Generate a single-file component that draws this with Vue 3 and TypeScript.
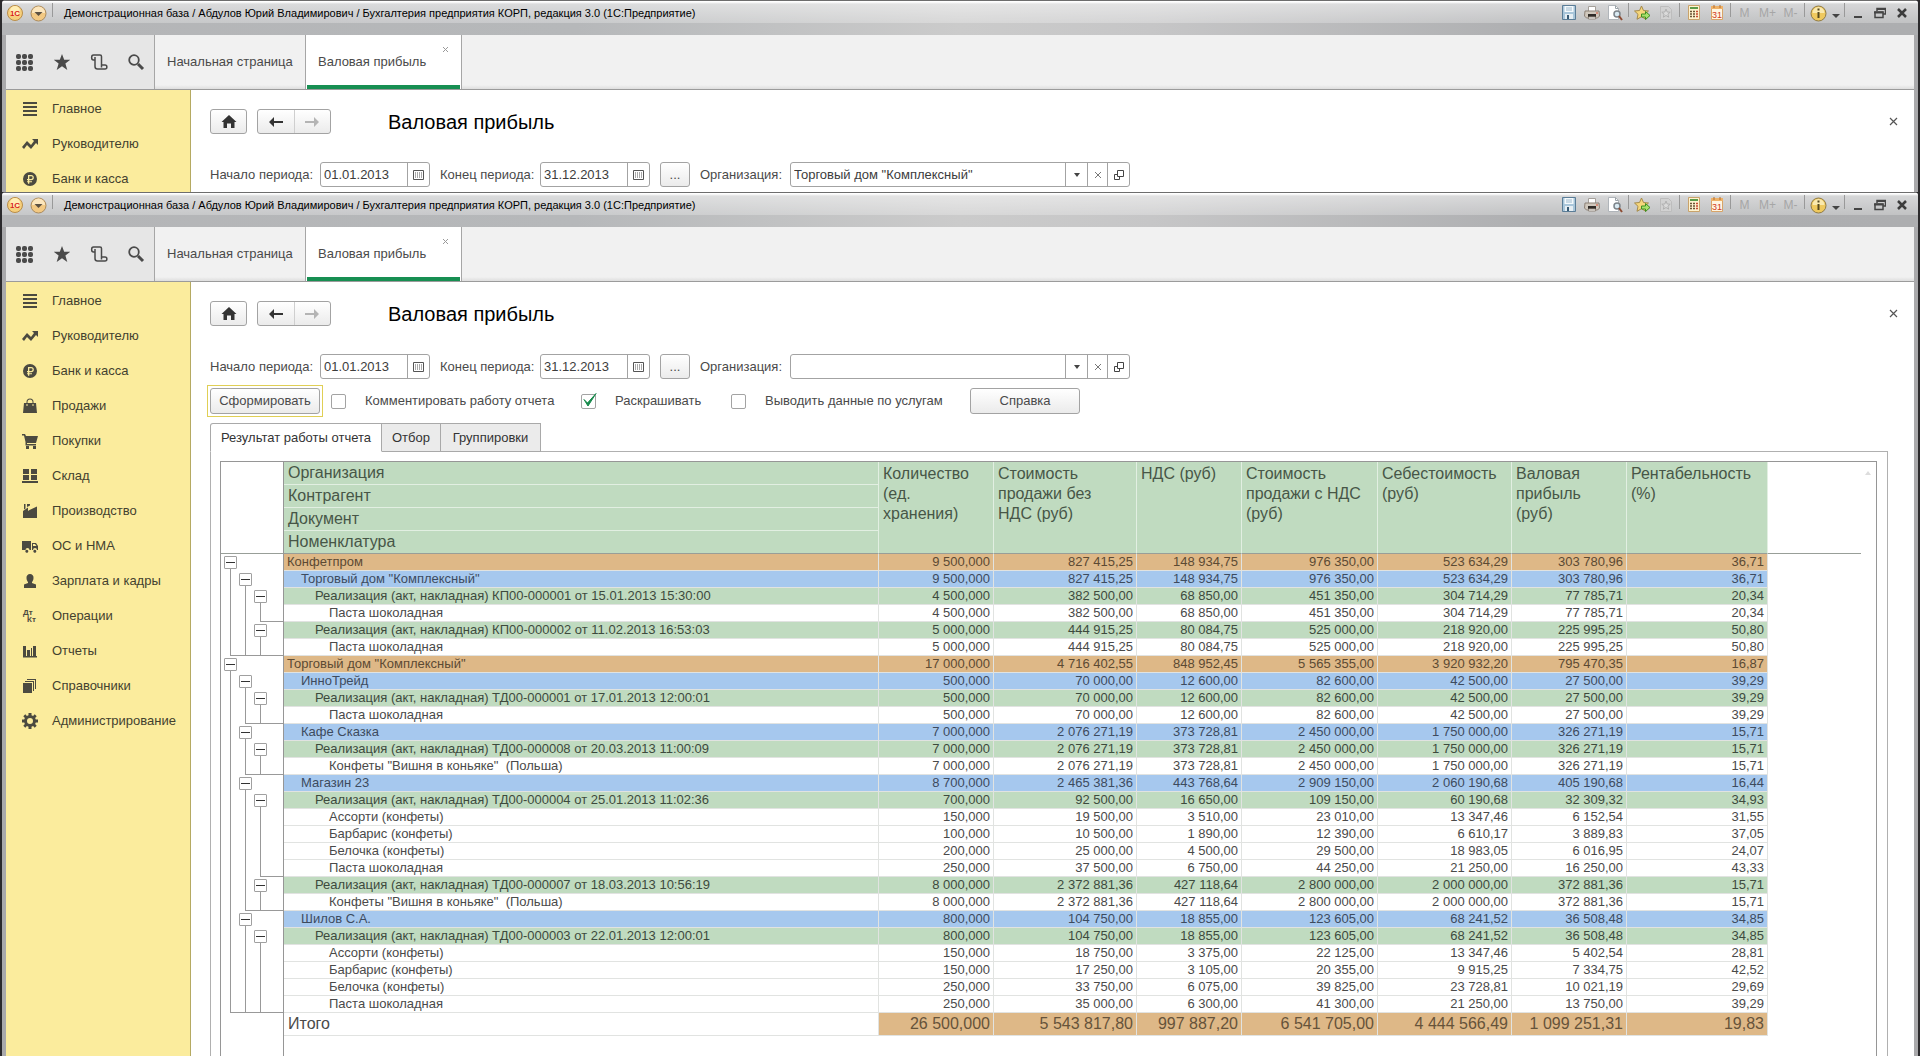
<script setup lang="ts">
import { reactive } from 'vue'

interface NavItem { label: string; d: string }
interface Row { level: number; name: string; cells: string[]; ends?: number }
interface AppWindow {
  id: string
  full: boolean
  from: string
  to: string
  org: string
}

const windows = reactive<AppWindow[]>([
  { id: 'back', full: false, from: '01.01.2013', to: '31.12.2013', org: 'Торговый дом "Комплексный"' },
  { id: 'front', full: true, from: '01.01.2013', to: '31.12.2013', org: '' },
])

const title = 'Демонстрационная база / Абдулов Юрий Владимирович / Бухгалтерия предприятия КОРП, редакция 3.0 (1С:Предприятие)'

const nav: NavItem[] = [
  { label: 'Главное', d: 'M1 1h14v2H1zM1 5h14v2H1zM1 9h14v2H1zM1 13h14v2H1z' },
  { label: 'Руководителю', d: 'M0 11 5 5l4 4 3-4-2-2h6v6l-2-2-5 6-4-4-3 4z' },
  { label: 'Банк и касса', d: 'M8 1a7 7 0 1 0 0 14A7 7 0 0 0 8 1zM6 4h3.200a2.600 2.600 0 0 1 0 5.200H7.300v1h2.700v1H7.300v1.500H6v-1.500H5v-1h1v-1H5V8h1zm1.300 1.200V8h1.900a1.400 1.400 0 0 0 0-2.800z' },
  { label: 'Продажи', d: 'M2 5h2.500V4a3.500 3.500 0 0 1 7 0v1H14l1 10H1zM5.500 5h5V4a2.500 2.500 0 0 0-5 0zM4.500 6v2h1V6zM10.500 6v2h1V6z' },
  { label: 'Покупки', d: 'M0 1h3l1 2h12l-2 7H5v1h9v1.500H3.500V9L2 2.500H0zM4 13h3v3H4zM11 13h3v3h-3z' },
  { label: 'Склад', d: 'M1 1h6v5H1zM9 1h6v5H9zM1 7h6v5H1zM9 7h6v5H9zM0 13h16v2H0z' },
  { label: 'Производство', d: 'M1 15V8l5-3.500V8l1.500-1L15 3.500V15zM2 1h1.500v4.500L2 6.500zM5 1h3v1.500L5 4z' },
  { label: 'ОС и НМА', d: 'M0 3h9v9H7.500a2 2 0 0 0-4 0H0zM10 5h4l2 3v4h-1a2 2 0 0 0-4 0h-1zM11 6v2h3.500L13 6zM4 12a1.500 1.500 0 1 1 0 2.500A1.500 1.500 0 0 1 4 12zM12 12a1.500 1.500 0 1 1 0 2.500 1.500 1.500 0 0 1 0-2.500z' },
  { label: 'Зарплата и кадры', d: 'M8 1a3.500 3.500 0 0 1 3.500 4c0 2-1 3.500-1.500 4v1l4 1.500V15H2v-3.500L6 10V9c-.5-.5-1.500-2-1.500-4A3.500 3.500 0 0 1 8 1z' },
  { label: 'Операции', d: '' },
  { label: 'Отчеты', d: 'M1 13V3h3v10h1V7h3v6h1V5h1v8h1V3h3v10h1v1.500H1z' },
  { label: 'Справочники', d: 'M1 5h9v10H1zM3 3h9v10h-1V4H3zM5 1h9v10h-1V2H5z' },
  { label: 'Администрирование', d: 'M6.500 0h3v2.200l1.600.7 1.600-1.600 2 2-1.600 1.600.7 1.600H16v3h-2.200l-.7 1.600 1.600 1.600-2 2-1.600-1.600-1.600.7V16h-3v-2.200l-1.600-.7-1.600 1.600-2-2 1.600-1.600-.7-1.600H0v-3h2.200l.7-1.600-1.600-1.600 2-2 1.600 1.600 1.600-.7zM8 5a3 3 0 1 0 0 6 3 3 0 0 0 0-6z' },
]

const groupHeads = ['Организация', 'Контрагент', 'Документ', 'Номенклатура']
const valueHeads = [
  'Количество\n(ед.\nхранения)',
  'Стоимость\nпродажи без\nНДС (руб)',
  'НДС (руб)',
  'Стоимость\nпродажи с НДС\n(руб)',
  'Себестоимость\n(руб)',
  'Валовая\nприбыль\n(руб)',
  'Рентабельность\n(%)',
]

function row(level: number, name: string, values: string, ends?: number): Row {
  return { level, name, cells: values.split('|'), ends }
}

// `ends` is the outermost outline level whose bracket closes under the row
const rows: Row[] = [
  row(0, 'Конфетпром', '9 500,000|827 415,25|148 934,75|976 350,00|523 634,29|303 780,96|36,71'),
  row(1, 'Торговый дом "Комплексный"', '9 500,000|827 415,25|148 934,75|976 350,00|523 634,29|303 780,96|36,71'),
  row(2, 'Реализация (акт, накладная) КП00-000001 от 15.01.2013 15:30:00', '4 500,000|382 500,00|68 850,00|451 350,00|304 714,29|77 785,71|20,34'),
  row(3, 'Паста шоколадная', '4 500,000|382 500,00|68 850,00|451 350,00|304 714,29|77 785,71|20,34', 2),
  row(2, 'Реализация (акт, накладная) КП00-000002 от 11.02.2013 16:53:03', '5 000,000|444 915,25|80 084,75|525 000,00|218 920,00|225 995,25|50,80'),
  row(3, 'Паста шоколадная', '5 000,000|444 915,25|80 084,75|525 000,00|218 920,00|225 995,25|50,80', 0),
  row(0, 'Торговый дом "Комплексный"', '17 000,000|4 716 402,55|848 952,45|5 565 355,00|3 920 932,20|795 470,35|16,87'),
  row(1, 'ИнноТрейд', '500,000|70 000,00|12 600,00|82 600,00|42 500,00|27 500,00|39,29'),
  row(2, 'Реализация (акт, накладная) ТД00-000001 от 17.01.2013 12:00:01', '500,000|70 000,00|12 600,00|82 600,00|42 500,00|27 500,00|39,29'),
  row(3, 'Паста шоколадная', '500,000|70 000,00|12 600,00|82 600,00|42 500,00|27 500,00|39,29', 1),
  row(1, 'Кафе Сказка', '7 000,000|2 076 271,19|373 728,81|2 450 000,00|1 750 000,00|326 271,19|15,71'),
  row(2, 'Реализация (акт, накладная) ТД00-000008 от 20.03.2013 11:00:09', '7 000,000|2 076 271,19|373 728,81|2 450 000,00|1 750 000,00|326 271,19|15,71'),
  row(3, 'Конфеты "Вишня в коньяке"  (Польша)', '7 000,000|2 076 271,19|373 728,81|2 450 000,00|1 750 000,00|326 271,19|15,71', 1),
  row(1, 'Магазин 23', '8 700,000|2 465 381,36|443 768,64|2 909 150,00|2 060 190,68|405 190,68|16,44'),
  row(2, 'Реализация (акт, накладная) ТД00-000004 от 25.01.2013 11:02:36', '700,000|92 500,00|16 650,00|109 150,00|60 190,68|32 309,32|34,93'),
  row(3, 'Ассорти (конфеты)', '150,000|19 500,00|3 510,00|23 010,00|13 347,46|6 152,54|31,55'),
  row(3, 'Барбарис (конфеты)', '100,000|10 500,00|1 890,00|12 390,00|6 610,17|3 889,83|37,05'),
  row(3, 'Белочка (конфеты)', '200,000|25 000,00|4 500,00|29 500,00|18 983,05|6 016,95|24,07'),
  row(3, 'Паста шоколадная', '250,000|37 500,00|6 750,00|44 250,00|21 250,00|16 250,00|43,33', 2),
  row(2, 'Реализация (акт, накладная) ТД00-000007 от 18.03.2013 10:56:19', '8 000,000|2 372 881,36|427 118,64|2 800 000,00|2 000 000,00|372 881,36|15,71'),
  row(3, 'Конфеты "Вишня в коньяке"  (Польша)', '8 000,000|2 372 881,36|427 118,64|2 800 000,00|2 000 000,00|372 881,36|15,71', 1),
  row(1, 'Шилов С.А.', '800,000|104 750,00|18 855,00|123 605,00|68 241,52|36 508,48|34,85'),
  row(2, 'Реализация (акт, накладная) ТД00-000003 от 22.01.2013 12:00:01', '800,000|104 750,00|18 855,00|123 605,00|68 241,52|36 508,48|34,85'),
  row(3, 'Ассорти (конфеты)', '150,000|18 750,00|3 375,00|22 125,00|13 347,46|5 402,54|28,81'),
  row(3, 'Барбарис (конфеты)', '150,000|17 250,00|3 105,00|20 355,00|9 915,25|7 334,75|42,52'),
  row(3, 'Белочка (конфеты)', '250,000|33 750,00|6 075,00|39 825,00|23 728,81|10 021,19|29,69'),
  row(3, 'Паста шоколадная', '250,000|35 000,00|6 300,00|41 300,00|21 250,00|13 750,00|39,29', 0),
]

const totals = ['26 500,000', '5 543 817,80', '997 887,20', '6 541 705,00', '4 444 566,49', '1 099 251,31', '19,83']

function slotClass(r: Row, slot: number) {
  return {
    toggle: slot === r.level,
    line: slot < r.level,
    corner: r.ends === slot,
    under: r.ends !== undefined && slot > r.ends,
  }
}

const options = reactive({ comment: false, colour: true, services: false })
</script>

<template>
  <div class="desktop">
    <section v-for="w in windows" :key="w.id" class="window" :class="w.full ? 'front' : 'back'">
      <header class="titlebar">
        <svg class="orb" width="16" height="16" viewBox="0 0 16 16">
          <circle cx="8" cy="8" r="7.500" fill="#f6cf7c" stroke="#b98d49" />
          <circle cx="8" cy="6" r="5" fill="#ffeeb4" />
          <text x="8" y="11" text-anchor="middle" font-size="8" font-weight="bold" fill="#d8231b">1С</text>
        </svg>
        <button class="orb-btn" type="button" aria-label="Меню">
          <svg width="17" height="17" viewBox="0 0 17 17">
            <circle cx="8.500" cy="8.500" r="7.500" fill="#f3c983" stroke="#a98a5e" />
            <path d="M2 8a6.500 6.500 0 0 1 13 0z" fill="#fce6bd" />
            <path d="M4.500 7h8l-4 4z" fill="#5c5142" />
          </svg>
        </button>
        <i class="sep first"></i>
        <span class="title">{{ title }}</span>
        <div class="title-tools">
          <button type="button" aria-label="Сохранить">
            <svg width="16" height="16" viewBox="0 0 16 16"><path d="M1.500.5h13v14h-13z" fill="#a9c6da" stroke="#5b7d97" /><path d="M3.500 1h9v6h-9z" fill="#f4f9fc" /><path d="M5 3h6M5 5h6" stroke="#9ebacd" /><path d="M4 9h8v5H4z" fill="#e6eef3" /><path d="M6 10h2v4H6z" fill="#385b75" /></svg>
          </button>
          <button type="button" aria-label="Печать">
            <svg width="16" height="16" viewBox="0 0 16 16"><path d="M4.500 1.500h7v5h-7z" fill="#fff" stroke="#a5a09a" /><path d="M1 6h14l.5 5-2 2h-11l-2-2z" fill="#d0c8bd" stroke="#8c8176" /><path d="M4 9h8v3H4z" fill="#302b27" /><path d="M4.500 12h7v2h-7z" fill="#fff" stroke="#92887d" /><path d="M12 8h2" stroke="#d84f35" /></svg>
          </button>
          <button type="button" aria-label="Предварительный просмотр">
            <svg width="16" height="16" viewBox="0 0 16 16"><path d="M1.500.5h7l3 3v11h-10z" fill="#fff" stroke="#b0b5ba" /><path d="M8.500.5v3h3" fill="none" stroke="#9aa2a8" /><circle cx="10" cy="9" r="3" fill="#d9e9f2" stroke="#7c848a" stroke-width="1.500" /><path d="m12 11 3 4" stroke="#8d4c34" stroke-width="2" /></svg>
          </button>
          <i class="sep"></i>
          <button type="button" aria-label="Добавить в избранное">
            <svg width="17" height="16" viewBox="0 0 17 16"><path d="m7.500 1 2 4.500 5 .5-3.600 3.300 1 5-4.400-2.600L3 14.300l1-5L.5 6l5-.5z" fill="#f6d67b" stroke="#a58a4a" /><path d="M7.500 9h4V6.500l4.500 4-4.500 4V12h-4z" fill="#a9e26b" stroke="#3e8f22" /></svg>
          </button>
          <button type="button" aria-label="Избранное" disabled>
            <svg width="16" height="16" viewBox="0 0 16 16"><path d="M2.500 1.500h8l3 3v10h-11z" fill="#d2d2d2" stroke="#bdbdbd" /><path d="m8 4 1.200 3 3 .2-2.300 2 .8 3L8 10.500l-2.700 1.700.8-3-2.300-2 3-.2z" fill="#dadada" stroke="#b0b0b0" /></svg>
          </button>
          <i class="sep"></i>
          <button type="button" aria-label="Калькулятор">
            <svg width="14" height="16" viewBox="0 0 14 16"><path d="M1.500.5h11v14h-11z" fill="#fff3cf" stroke="#c9a36b" /><path d="M3 2h8v2H3z" fill="#5b9a49" /><path d="M3 6.500h2M6 6.500h2M3 9h2M6 9h2M3 11.500h2M6 11.500h2" stroke="#6a5334" stroke-width="1.500" /><path d="M9 6.500h2M9 9h2M9 11.500h2" stroke="#c84a32" stroke-width="1.500" /></svg>
          </button>
          <button type="button" aria-label="Календарь">
            <svg width="14" height="16" viewBox="0 0 14 16"><path d="M1.500 1.500h11v13h-11z" fill="#fff6e2" stroke="#d8a469" /><path d="M1 1h12v3H1z" fill="#efb268" /><path d="M4 0v3M10 0v3" stroke="#b26a2c" /><text x="7" y="13" text-anchor="middle" font-size="9" fill="#cf3a22">31</text></svg>
          </button>
          <i class="sep"></i>
          <button type="button" class="mem" disabled>M</button>
          <button type="button" class="mem" disabled>M+</button>
          <button type="button" class="mem" disabled>M-</button>
          <i class="sep"></i>
          <button type="button" aria-label="Сведения">
            <svg width="17" height="17" viewBox="0 0 17 17"><circle cx="8.500" cy="8.500" r="7.500" fill="#efc95e" stroke="#8f7a45" /><path d="M2.500 8a6 6 0 0 1 12 0z" fill="#fae9ae" /><path d="M7.500 3.500h2v2h-2zM7.500 7h2v6h-2z" fill="#55491f" /></svg>
          </button>
          <button type="button" class="slim" aria-label="Еще">
            <svg width="8" height="16" viewBox="0 0 8 16"><path d="M0 9h8l-4 4z" fill="#444" /></svg>
          </button>
          <i class="sep"></i>
          <button type="button" class="win" aria-label="Свернуть">
            <svg width="12" height="14" viewBox="0 0 12 14"><path d="M2 10h8v2H2z" fill="#444" /></svg>
          </button>
          <button type="button" class="win" aria-label="Восстановить">
            <svg width="12" height="12" viewBox="0 0 12 12"><path d="M3 4V1.500h8.500V7H9M1 5h8v5.500H1z" fill="none" stroke="#444" stroke-width="1.500" /><path d="M3 1h9v2H3zM0 4.500h9.500v2H0z" fill="#444" /></svg>
          </button>
          <button type="button" class="win" aria-label="Закрыть">
            <svg width="12" height="12" viewBox="0 0 12 12"><path d="m2 2 8 8M10 2l-8 8" stroke="#3c3c3c" stroke-width="2.500" /></svg>
          </button>
        </div>
      </header>

      <div class="client">
        <div class="toolbar">
          <div class="tools">
            <button type="button" aria-label="Разделы">
              <svg width="17" height="17" viewBox="0 0 17 17"><g fill="#4a4a4a"><template v-for="y in 3" :key="y"><rect v-for="x in 3" :key="x" :x="(x - 1) * 6" :y="(y - 1) * 6" width="5" height="5" rx="2" /></template></g></svg>
            </button>
            <button type="button" aria-label="Избранное">
              <svg width="18" height="18" viewBox="0 0 18 18"><path d="m9 1 2.200 5.800H17.300l-4.900 3.700L14.300 17 9 13.200 3.700 17l1.900-6.500L.7 6.800h6.100z" fill="#4a4a4a" /></svg>
            </button>
            <button type="button" aria-label="История">
              <svg width="18" height="18" viewBox="0 0 18 18"><path d="M5 7H3.500C1 7 1 2 3.500 2H10c1 0 1.500.5 1.500 1.500V12H15c2.500 0 2.500 4 0 4H7.500C6 16 5 15 5 13.500V4M11.500 12v2.500" fill="none" stroke="#4a4a4a" stroke-width="1.500" /></svg>
            </button>
            <button type="button" aria-label="Поиск">
              <svg width="18" height="18" viewBox="0 0 18 18"><circle cx="7" cy="7" r="4.800" fill="none" stroke="#4a4a4a" stroke-width="1.800" /><path d="m11 11 5 5" stroke="#4a4a4a" stroke-width="3" /></svg>
            </button>
          </div>
          <a href="#" class="tab">Начальная страница</a>
          <div class="tab current">
            <a href="#">Валовая прибыль</a>
            <button type="button" class="tab-close" aria-label="Закрыть вкладку">
              <svg width="7" height="7" viewBox="0 0 7 7"><path d="m1 1 5 5M6 1 1 6" stroke="#9a9a9a" /></svg>
            </button>
          </div>
        </div>

        <div class="body">
          <nav class="sidebar">
            <a v-for="item in (w.full ? nav : nav.slice(0, 3))" :key="item.label" href="#">
              <svg width="16" height="16" viewBox="0 0 16 16">
                <path v-if="item.d" :d="item.d" fill="#4b4a40" fill-rule="evenodd" />
                <g v-else font-size="8" font-weight="bold" fill="#4b4a40"><text x="1" y="7">Дт</text><text x="5" y="14">Кт</text></g>
              </svg>
              {{ item.label }}
            </a>
          </nav>

          <main class="content">
            <div class="head-row">
              <button type="button" class="btn square" aria-label="Домой">
                <svg width="16" height="14" viewBox="0 0 16 14"><path d="m8 0 7.500 7h-2v6H10V8.500H6V13H2.500V7h-2z" fill="#333" /></svg>
              </button>
              <div class="pair">
                <button type="button" aria-label="Назад">
                  <svg width="14" height="12" viewBox="0 0 14 12"><path d="M14 5v2H5v4L0 6l5-5v4z" fill="#333" /></svg>
                </button>
                <button type="button" aria-label="Вперед" disabled>
                  <svg width="14" height="12" viewBox="0 0 14 12"><path d="M0 5v2h9v4l5-5-5-5v4z" fill="#b4b4b4" /></svg>
                </button>
              </div>
              <h1>Валовая прибыль</h1>
              <button type="button" class="page-close" aria-label="Закрыть">
                <svg width="9" height="9" viewBox="0 0 9 9"><path d="m1 1 7 7M8 1 1 8" stroke="#555" stroke-width="1.200" /></svg>
              </button>
            </div>

            <div class="form-row">
              <label :for="w.id + '-from'" class="period">Начало периода:</label>
              <div class="field date">
                <input :id="w.id + '-from'" v-model="w.from" type="text" />
                <button type="button" aria-label="Выбрать дату">
                  <svg width="11" height="10" viewBox="0 0 11 10"><path d="M.5.5h10v9H.5z" fill="none" stroke="#555" /><path d="M2 3h7M2 5h7M2 7h7" stroke="#555" stroke-dasharray="1 1" /></svg>
                </button>
              </div>
              <label :for="w.id + '-to'" class="period">Конец периода:</label>
              <div class="field date">
                <input :id="w.id + '-to'" v-model="w.to" type="text" />
                <button type="button" aria-label="Выбрать дату">
                  <svg width="11" height="10" viewBox="0 0 11 10"><path d="M.5.5h10v9H.5z" fill="none" stroke="#555" /><path d="M2 3h7M2 5h7M2 7h7" stroke="#555" stroke-dasharray="1 1" /></svg>
                </button>
              </div>
              <button type="button" class="btn dots">...</button>
              <label :for="w.id + '-org'" class="org-label">Организация:</label>
              <div class="field org">
                <input :id="w.id + '-org'" v-model="w.org" type="text" />
                <button type="button" aria-label="Выбрать">
                  <svg width="6" height="4" viewBox="0 0 6 4"><path d="M0 0h6L3 4z" fill="#444" /></svg>
                </button>
                <button type="button" class="narrow" aria-label="Очистить">
                  <svg width="6" height="6" viewBox="0 0 6 6"><path d="m0 0 6 6M6 0 0 6" stroke="#777" /></svg>
                </button>
                <button type="button" aria-label="Открыть">
                  <svg width="10" height="10" viewBox="0 0 10 10"><path d="M3.500.5h6v6h-6zM3.500 4.500h-3v5h5v-3" fill="none" stroke="#444" /></svg>
                </button>
              </div>
            </div>

            <template v-if="w.full">
              <div class="option-row">
                <button type="button" class="btn wide focus">Сформировать</button>
                <label class="check c1">
                  <span class="box"><input v-model="options.comment" type="checkbox" /></span>
                  Комментировать работу отчета
                </label>
                <label class="check c2">
                  <span class="box">
                    <input v-model="options.colour" type="checkbox" />
                    <svg v-if="options.colour" width="16" height="16" viewBox="0 0 16 16"><path d="M2 7.500 5.500 11 14 1.500 6 14z" fill="#178a4c" stroke="#178a4c" stroke-linejoin="round" /></svg>
                  </span>
                  Раскрашивать
                </label>
                <label class="check c3">
                  <span class="box"><input v-model="options.services" type="checkbox" /></span>
                  Выводить данные по услугам
                </label>
                <button type="button" class="btn wide help">Справка</button>
              </div>

              <div class="tabs">
                <button type="button" class="t-result active">Результат работы отчета</button>
                <button type="button" class="t-filter">Отбор</button>
                <button type="button" class="t-groups">Группировки</button>
              </div>

              <div class="panel">
                <div class="sheet">
                  <table>
                    <colgroup>
                      <col class="w-gutter" /><col class="w-name" /><col class="w-115" /><col class="w-143" /><col class="w-105" />
                      <col class="w-136" /><col class="w-134" /><col class="w-115" /><col class="w-141" /><col />
                    </colgroup>
                    <thead>
                      <tr v-for="(g, i) in groupHeads" :key="g">
                        <td v-if="i === 0" rowspan="4" class="gutter"></td>
                        <th scope="col">{{ g }}</th>
                        <template v-if="i === 0">
                          <th v-for="h in valueHeads" :key="h" scope="col" rowspan="4" class="value">{{ h }}</th>
                          <td rowspan="4" class="rest"></td>
                        </template>
                      </tr>
                    </thead>
                    <tbody>
                      <tr v-for="(r, i) in rows" :key="i" :class="'l' + r.level">
                        <td class="gutter">
                          <div class="outline">
                            <div v-for="s in 3" :key="s" class="slot" :class="slotClass(r, s - 1)">
                              <button v-if="s - 1 === r.level" type="button" aria-label="Свернуть группу"></button>
                            </div>
                            <div class="slot" :class="{ under: r.ends !== undefined }"></div>
                          </div>
                        </td>
                        <td class="name">{{ r.name }}</td>
                        <td v-for="(c, k) in r.cells" :key="k" class="num">{{ c }}</td>
                      </tr>
                      <tr class="total">
                        <td class="gutter"></td>
                        <td class="name">Итого</td>
                        <td v-for="(c, k) in totals" :key="k" class="num">{{ c }}</td>
                      </tr>
                      <tr class="tail"><td class="gutter"></td></tr>
                    </tbody>
                  </table>
                  <svg class="up" width="6" height="4" viewBox="0 0 6 4"><path d="M0 4h6L3 0z" fill="#ddd" /></svg>
                </div>
              </div>
            </template>
          </main>
        </div>
      </div>
    </section>
  </div>
</template>

<style>
body {
  margin: 0;
}
</style>

<style scoped>
.desktop {
  display: flex;
  flex-direction: column;
  height: 100vh;
  overflow: hidden;
  background: #2b2a2c;
  font: 13px/16px 'Liberation Sans', Arial, sans-serif;
  color: #4a4a4a;
}
.desktop * {
  box-sizing: border-box;
}
button {
  padding: 0;
  border: 0;
  background: none;
  font: inherit;
  color: inherit;
  display: flex;
  align-items: center;
  justify-content: center;
}
a {
  color: inherit;
  text-decoration: none;
}
svg {
  display: block;
  flex: none;
}

.window {
  margin: 0 2px;
  display: flex;
  flex-direction: column;
  overflow: hidden;
  border-radius: 4px 4px 0 0;
  background: #a9a9ab;
}
.back {
  flex: none;
  height: 192px;
}
.front {
  flex: 1;
  min-height: 0;
}
.titlebar {
  flex: none;
  height: 35px;
  padding: 3px 5px 13px 4px;
  display: flex;
  align-items: center;
  border-top: 1px solid #6d6d6d;
  background:
    linear-gradient(#fff 1px, rgba(255, 255, 255, 0.5) 3px, rgba(255, 255, 255, 0.38) 12px, rgba(255, 255, 255, 0.25) 22px, transparent 22px),
    linear-gradient(90deg, #b4b5b7, #b6b8ba 30%, #cbcbcb 50%, #c6c6c7 60%, #aeafb1 80%, #adaeb0);
  color: #000;
  font-size: 11px;
}
.orb {
  margin: 0 7px 0 1px;
}
.sep {
  flex: none;
  width: 5px;
  height: 14px;
  margin-bottom: 6px;
  background: linear-gradient(#999, #999) 2px 0 / 1px 100% no-repeat;
}
.sep.first {
  margin-left: 3px;
}
.title {
  flex: 1;
  min-width: 0;
  padding-left: 9px;
  white-space: nowrap;
  overflow: hidden;
}
.title-tools {
  display: flex;
  align-items: center;
}
.title-tools button {
  width: 23px;
  height: 17px;
}
.title-tools .slim {
  width: 12px;
}
.title-tools .win {
  width: 22px;
}
.title-tools .mem {
  font-size: 12px;
  color: #a6a6a6;
}

.client {
  flex: 1;
  min-height: 0;
  margin: 0 4px;
  display: flex;
  flex-direction: column;
  background: #fff;
}
.toolbar {
  flex: none;
  display: flex;
  height: 55px;
  border-bottom: 1px solid #9b9b9b;
  background: linear-gradient(#f1f1f1 50px, #dedede);
}
.tools {
  display: flex;
  background: #e6e6e6;
  border-right: 1px solid #a6a6a6;
}
.tools button {
  width: 37px;
}
.tab {
  display: flex;
  align-items: center;
  width: 151px;
  padding-left: 12px;
  border-right: 1px solid #a6a6a6;
  white-space: nowrap;
}
.tab.current {
  position: relative;
  width: 156px;
  background: linear-gradient(#178f52, #178f52) 1px 100% / 153px 4px no-repeat #fff;
}
.tab-close {
  position: absolute;
  top: 11px;
  right: 12px;
}
.body {
  flex: 1;
  min-height: 0;
  display: flex;
}
.sidebar {
  flex: none;
  width: 185px;
  padding-top: 1px;
  background: #fbec9d;
  border-right: 1px solid #b5aa62;
  color: #43412f;
}
.sidebar a {
  display: flex;
  align-items: center;
  gap: 14px;
  height: 35px;
  padding-left: 16px;
  white-space: nowrap;
}

.content {
  flex: 1;
  min-width: 0;
  display: flex;
  flex-direction: column;
  padding: 19px 26px 0 19px;
}
.head-row {
  flex: none;
  display: flex;
  align-items: center;
  height: 25px;
  margin-bottom: 28px;
}
.btn,
.pair {
  height: 25px;
  border: 1px solid #a3a3a3;
  border-radius: 3px;
  background: linear-gradient(#fff, #ebebeb);
}
.square {
  width: 37px;
}
.pair {
  display: flex;
  width: 74px;
  margin-left: 10px;
}
.pair button {
  flex: 1;
}
.pair button + button {
  border-left: 1px solid #cfcfcf;
}
h1 {
  margin: 0 auto 0 57px;
  padding-top: 2px;
  font-size: 20px;
  line-height: 25px;
  font-weight: normal;
  color: #000;
}
.page-close {
  margin-right: -15px;
  width: 20px;
  height: 20px;
}
.form-row {
  flex: none;
  display: flex;
  align-items: center;
  margin-bottom: 9px;
}
.period {
  width: 110px;
}
.field {
  display: flex;
  height: 25px;
  border: 1px solid #a3a3a3;
  border-radius: 3px;
  background: #fff;
}
.field input {
  flex: 1;
  min-width: 0;
  padding: 1px 3px 0;
  border: 0;
  background: none;
  font: inherit;
  color: #3c3c3c;
  outline: 0;
}
.field button {
  width: 22px;
  border-left: 1px solid #a3a3a3;
}
.field .narrow {
  width: 20px;
}
.date {
  width: 110px;
  margin-right: 10px;
}
.date + .period {
  width: 100px;
}
.dots {
  width: 30px;
}
.org-label {
  width: 90px;
  margin-left: 10px;
}
.org {
  width: 340px;
}
.option-row {
  flex: none;
  display: flex;
  align-items: center;
  margin-bottom: 9px;
}
.wide {
  width: 110px;
  height: 26px;
}
.focus {
  position: relative;
}
.focus::after {
  content: '';
  position: absolute;
  inset: -4px;
  border: 1px solid #e0cf55;
}
.check {
  display: flex;
  align-items: center;
  gap: 19px;
  white-space: nowrap;
}
.c1 {
  width: 250px;
  margin-left: 11px;
}
.c2 {
  width: 150px;
}
.c3 {
  width: 239px;
}
.box {
  position: relative;
  width: 15px;
  height: 15px;
}
.box input {
  appearance: none;
  display: block;
  width: 15px;
  height: 15px;
  margin: 0;
  border: 1px solid #a3a3a3;
  border-radius: 2px;
  background: #fff;
}
.box svg {
  position: absolute;
  left: 1px;
  top: -2px;
}

.tabs {
  flex: none;
  display: flex;
  height: 29px;
  color: #333;
}
.tabs button {
  position: relative;
  margin-right: -1px;
  border: 1px solid #a9a9a9;
  background: #ebebeb;
  white-space: nowrap;
}
.tabs .t-result {
  width: 172px;
}
.tabs .t-filter {
  width: 60px;
}
.tabs .t-groups {
  width: 101px;
}
.tabs .active {
  background: #fff;
  border-bottom-color: #fff;
  border-radius: 3px 0 0 0;
  z-index: 1;
}
.panel {
  flex: 1;
  min-height: 0;
  margin-top: -1px;
  padding: 9px 10px 0 9px;
  border: 1px solid #b0b0b0;
  border-bottom: 0;
  display: flex;
}
.sheet {
  position: relative;
  flex: 1;
  min-width: 0;
  overflow: hidden;
  padding-right: 15px;
  border: 1px solid #969696;
  border-bottom: 0;
}
.up {
  position: absolute;
  right: 5px;
  top: 9px;
}
table {
  width: 100%;
  table-layout: fixed;
  border-collapse: separate;
  border-spacing: 0;
}
.w-gutter { width: 63px; }
.w-name { width: 595px; }
.w-105 { width: 105px; }
.w-115 { width: 115px; }
.w-134 { width: 134px; }
.w-136 { width: 136px; }
.w-141 { width: 141px; }
.w-143 { width: 143px; }
td,
th {
  padding: 0;
  border: 0 solid #e1e3e1;
  text-align: left;
  font-weight: normal;
  white-space: pre;
}
thead th {
  height: 23px;
  padding: 0 4px;
  font-size: 16px;
  line-height: 22px;
  border-width: 0 1px 1px 0;
  border-color: #e2efe2;
  background: #c0dbc0;
  color: #475647;
}
thead .value {
  padding: 2px 4px 0;
  line-height: 20px;
  vertical-align: top;
}
thead tr:last-child th,
thead .value,
thead .gutter,
thead .rest {
  border-bottom: 1px solid #989e98;
}
.gutter {
  border-right: 1px solid #969696;
}
.outline {
  display: flex;
  padding-left: 2px;
}
.slot {
  width: 15px;
  height: 17px;
  background-repeat: no-repeat;
}
.slot.line {
  background-image: linear-gradient(#999, #999);
  background-size: 1px 100%;
  background-position: 7px 0;
}
.slot.toggle {
  padding: 2px 1px 0;
  background-image: linear-gradient(#999, #999);
  background-size: 1px 4px;
  background-position: 7px 100%;
}
.slot.toggle button {
  width: 13px;
  height: 13px;
  border: 1px solid #a0a0a0;
  border-radius: 1px;
  background: linear-gradient(#333, #333) center / 9px 1px no-repeat #fff;
}
.slot.under {
  background-image: linear-gradient(#999, #999), linear-gradient(#999, #999);
  background-size: 1px 100%, 100% 1px;
  background-position: 7px 0, 0 100%;
}
.slot.under:last-child {
  background-size: 0 0, 100% 1px;
}
.slot.corner {
  background-image: linear-gradient(#999, #999), linear-gradient(#999, #999);
  background-size: 1px 100%, 8px 1px;
  background-position: 7px 0, 7px 100%;
}
.name,
.num {
  border-width: 0 1px 1px 0;
  height: 17px;
}
.num {
  padding-right: 3px;
  text-align: right;
}
.l0 .name,
.l0 .num {
  background: #deb887;
  color: #5c4a33;
}
.l1 .name,
.l1 .num {
  background: #a6c8ee;
  color: #3d4b5e;
}
.l2 .name,
.l2 .num {
  background: #c0dbc0;
  color: #3d4a3d;
}
.l0 .name { padding-left: 3px; }
.l1 .name { padding-left: 17px; }
.l2 .name { padding-left: 31px; }
.l3 .name { padding-left: 45px; }
.total .name,
.total .num {
  height: 23px;
  font-size: 16px;
  line-height: 22px;
}
.total .name {
  padding-left: 4px;
}
.total .num {
  background: #deb887;
  color: #66533a;
}
.tail td {
  height: 400px;
}
</style>
